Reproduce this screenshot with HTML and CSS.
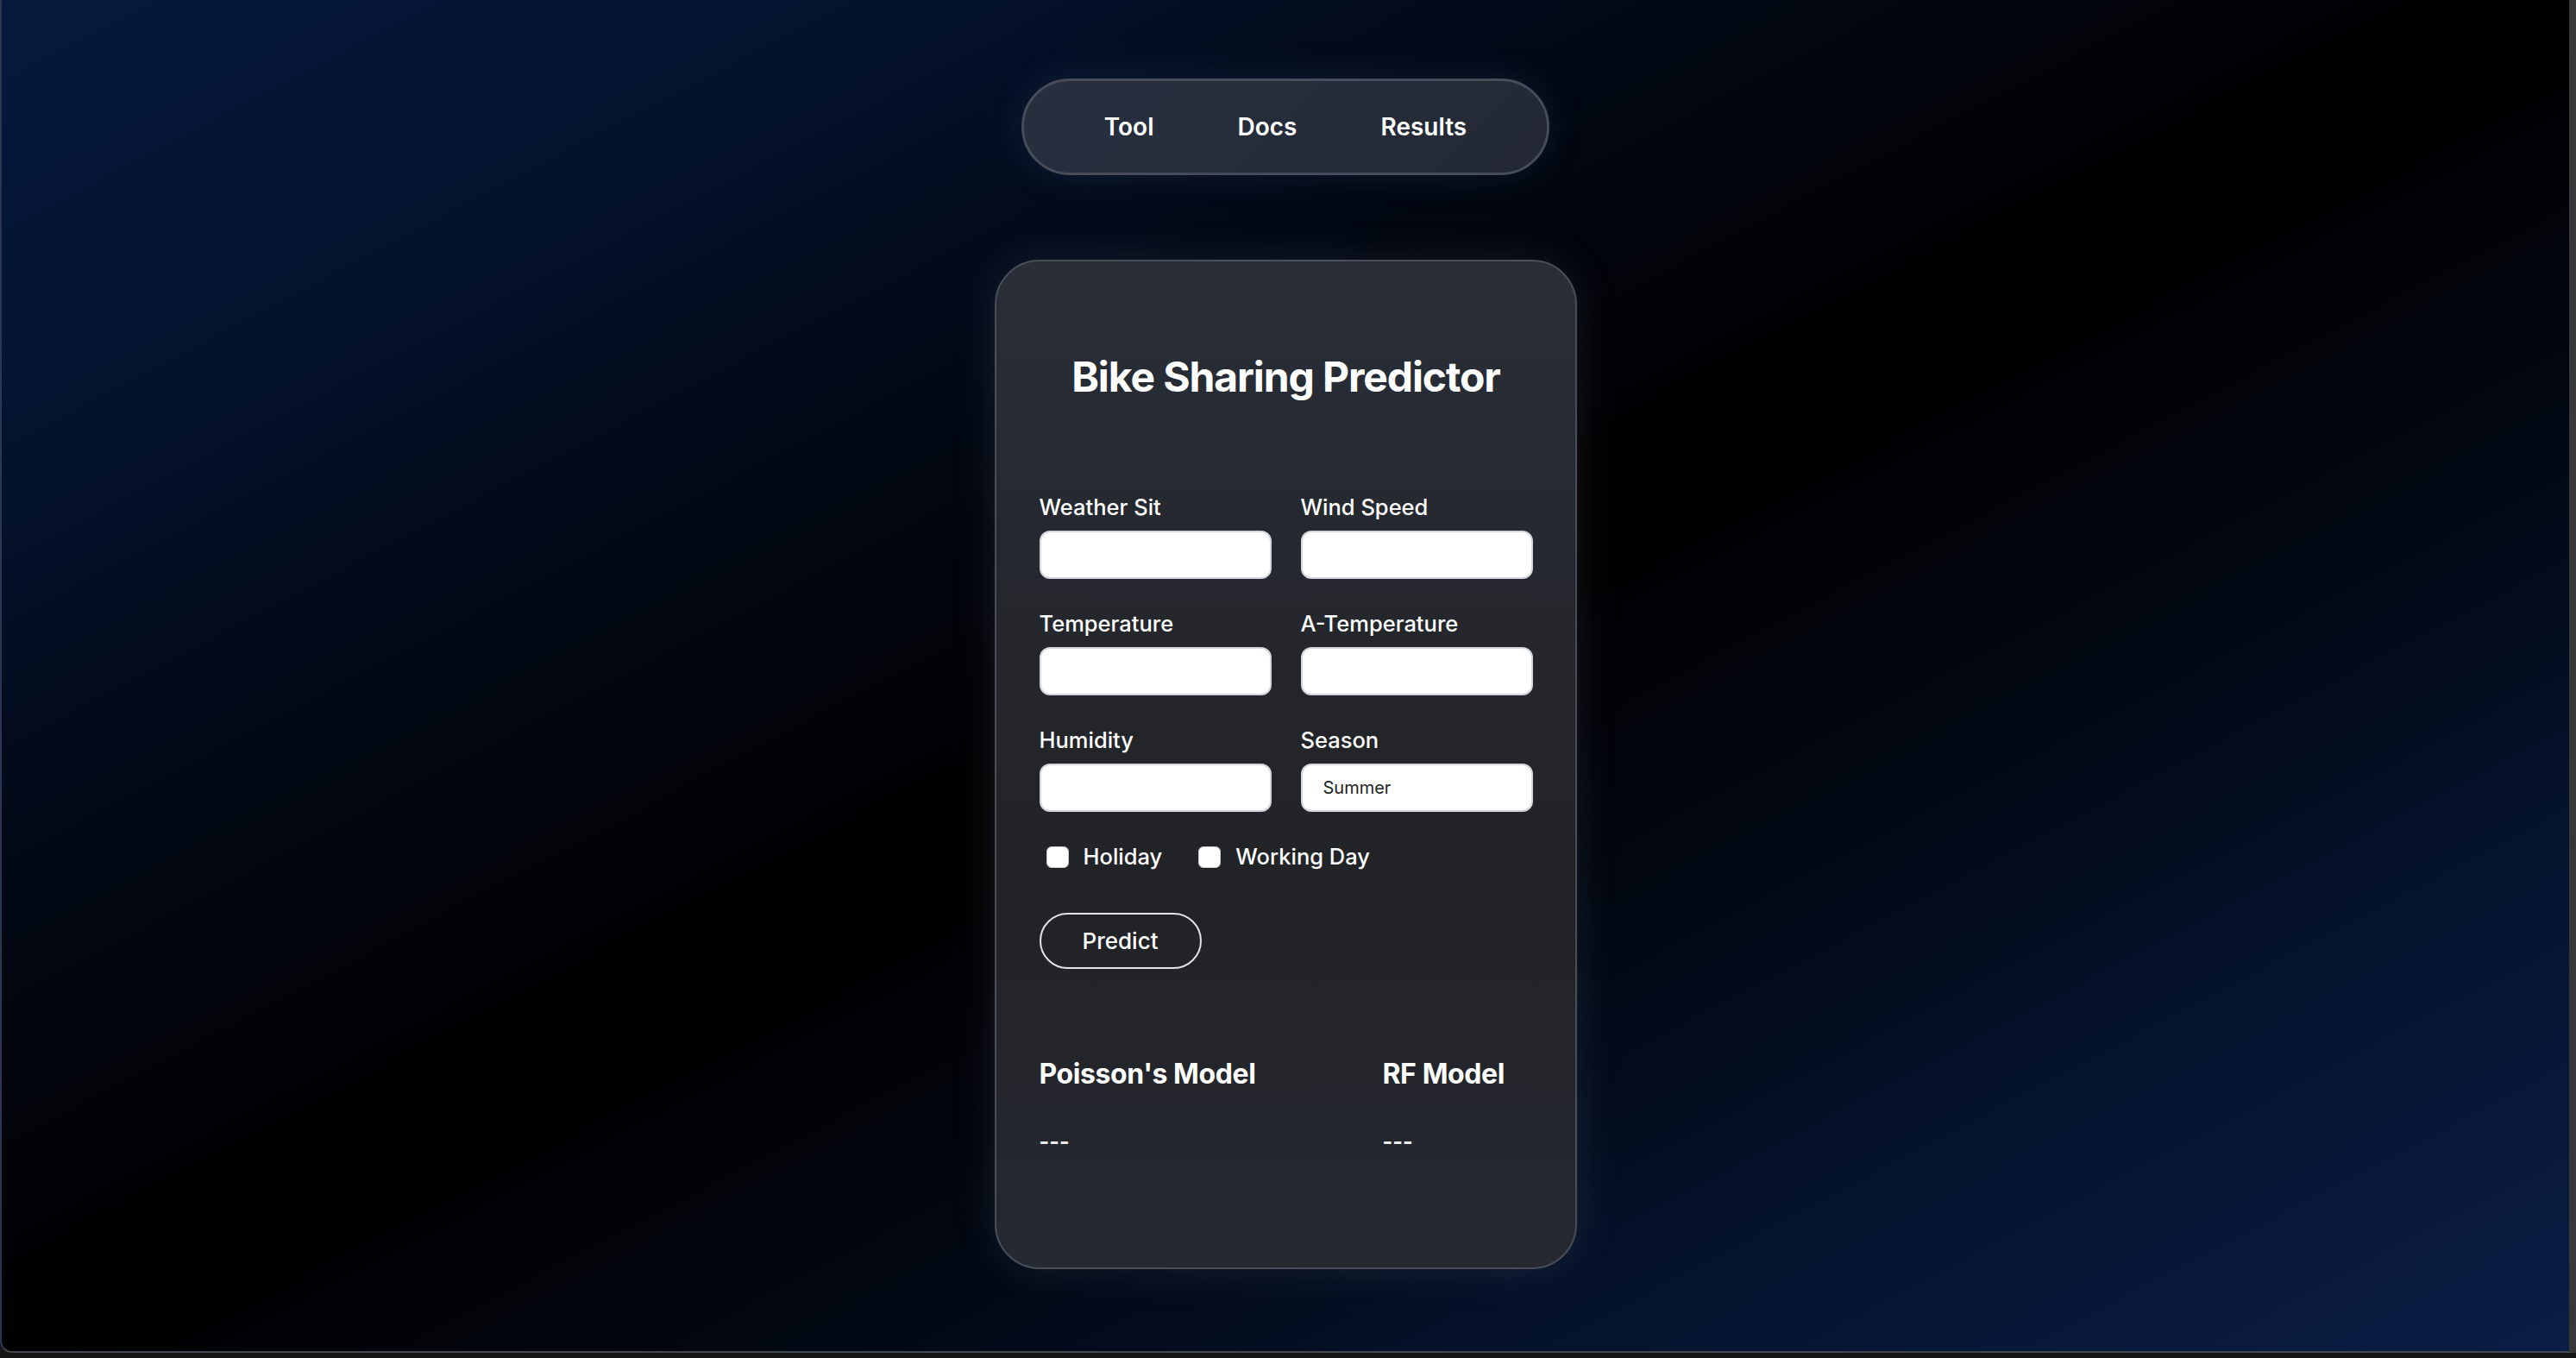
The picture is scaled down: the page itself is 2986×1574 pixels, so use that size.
FILE: index.html
```html
<!DOCTYPE html>
<html lang="en">
<head>
<meta charset="utf-8">
<title>Bike Sharing Predictor</title>
<link rel="stylesheet" href="styles.css">
</head>
<body>
<div class="window">
  <nav class="nav">
    <a class="nav-link" href="#">Tool</a>
    <a class="nav-link" href="#">Docs</a>
    <a class="nav-link" href="#">Results</a>
  </nav>
  <main class="card">
    <h1 class="title">Bike Sharing Predictor</h1>
    <form class="form">
      <div class="grid">
        <div class="field"><label class="label">Weather Sit</label><input class="input" type="text"></div>
        <div class="field"><label class="label">Wind Speed</label><input class="input" type="text"></div>
        <div class="field"><label class="label">Temperature</label><input class="input" type="text"></div>
        <div class="field"><label class="label">A-Temperature</label><input class="input" type="text"></div>
        <div class="field"><label class="label">Humidity</label><input class="input" type="text"></div>
        <div class="field"><label class="label">Season</label><input class="input input-value" type="text" value="Summer"></div>
      </div>
      <div class="checks">
        <label class="check"><input class="box" type="checkbox"><span>Holiday</span></label>
        <label class="check"><input class="box" type="checkbox"><span>Working Day</span></label>
      </div>
      <button class="predict" type="button">Predict</button>
    </form>
    <section class="results">
      <div class="result">
        <h3 class="result-title">Poisson's Model</h3>
        <p class="result-value">---</p>
      </div>
      <div class="result">
        <h3 class="result-title">RF Model</h3>
        <p class="result-value">---</p>
      </div>
    </section>
  </main>
</div>
</body>
</html>
```
FILE: styles.css
```css
* { box-sizing: border-box; }
html, body { margin: 0; padding: 0; }
body {
  width: 2986px;
  height: 1574px;
  overflow: hidden;
  background: #161616;
  font-family: Inter, "Noto Sans", sans-serif;
  color: #fff;
}
.window {
  height: 1568px;
  border-left: 2px solid #2b3752;
  border-right: 8px solid #383838;
  border-bottom: 2px solid #454a52;
  border-bottom-left-radius: 14px;
  background: linear-gradient(to bottom right, #061a3e 0%, #04122c 18%, #01050d 38%, #000 50%, #01050d 62%, #05142f 82%, #0a1d45 100%);
  display: flex;
  flex-direction: column;
  align-items: center;
  padding-top: 91px;
}
.nav {
  display: flex;
  align-items: center;
  gap: 97px;
  height: 112px;
  padding: 0 93px;
  border: 3px solid #464c59;
  border-radius: 56px;
  background: linear-gradient(135deg, #283040, #232833);
  box-shadow: 0 0 40px rgba(90, 110, 150, 0.18);
}
.nav-link {
  color: #fff;
  text-decoration: none;
  font-size: 28px;
  font-weight: 600;
  line-height: 34px;
}
.card {
  margin-top: 98px;
  width: 675px;
  border: 2.5px solid #4a4e58;
  border-radius: 52px;
  background: linear-gradient(to bottom, #292e38 0%, #232529 45%, #222326 65%, #252932 100%);
  box-shadow: 0 0 50px rgba(170, 180, 200, 0.13);
  padding: 105px 49px 127px 50px;
}
.title {
  margin: 0;
  text-align: center;
  font-size: 48px;
  font-weight: 700;
  line-height: 58px;
  letter-spacing: -1.1px;
}
.form { margin-top: 107px; }
.grid {
  display: grid;
  grid-template-columns: 1fr 1fr;
  column-gap: 34px;
  row-gap: 37px;
}
.field { display: flex; flex-direction: column; }
.label {
  font-size: 25.5px;
  font-weight: 500;
  line-height: 30px;
  margin-bottom: 12px;
}
.input {
  height: 56px;
  width: 100%;
  background: #fff;
  border: 2px solid #d3d6dc;
  border-radius: 12px;
  font-family: Inter, "Noto Sans", sans-serif;
  font-size: 20px;
  color: #1e1e1e;
  padding: 0 24px;
  outline: none;
}
.checks {
  margin-top: 37px;
  display: flex;
  align-items: center;
  gap: 34px;
  height: 30px;
}
.check {
  display: flex;
  align-items: center;
  gap: 17px;
  font-size: 25.5px;
  font-weight: 500;
  line-height: 30px;
}
.box {
  appearance: none;
  -webkit-appearance: none;
  margin: 0 0 0 8px;
  width: 26px;
  height: 25px;
  background: #fff;
  border: 1px solid #c9ccd2;
  border-radius: 6px;
}
.predict {
  display: block;
  margin-top: 50px;
  width: 188px;
  height: 65px;
  border: 2px solid #e4e4e4;
  border-radius: 33px;
  background: transparent;
  color: #fff;
  font-family: Inter, "Noto Sans", sans-serif;
  font-size: 26px;
  font-weight: 500;
  padding: 0;
}
.results {
  margin-top: 103px;
  display: grid;
  grid-template-columns: 398px 1fr;
}
.result-title {
  margin: 0;
  font-size: 32px;
  font-weight: 700;
  line-height: 38px;
  letter-spacing: -0.4px;
}
.result-value {
  margin: 40px 0 0;
  font-size: 25px;
  font-weight: 700;
  line-height: 38px;
  color: #ececec;
}
```
